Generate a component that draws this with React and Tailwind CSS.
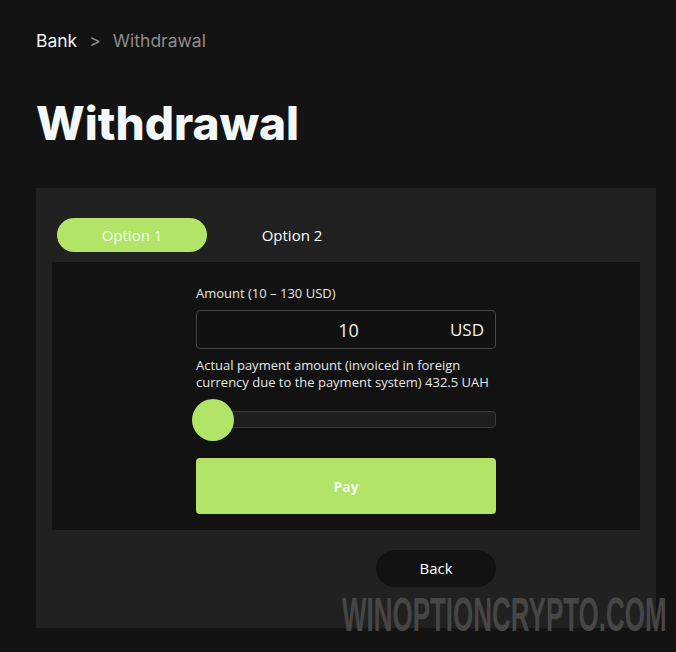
import React, { useState } from 'react';

const GREEN = 'bg-[#b1e467]';

export default function App() {
  const [tab, setTab] = useState(1);
  const [amount, setAmount] = useState('10');

  return (
    <div className="relative min-h-[652px] w-full overflow-hidden bg-[#131313] px-9 pt-[29px] pb-6 text-white" style={{ fontFamily: '"Open Sans", "Liberation Sans", sans-serif' }}>
      {/* breadcrumb */}
      <nav className="flex items-center gap-[12px] text-[17.5px] leading-[24px]" style={{ fontFamily: 'Inter, sans-serif' }}>
        <span className="text-[#f2f2f2]">Bank</span>
        <span className="text-[#8c8c8c]">&gt;</span>
        <span className="text-[#8c8c8c]">Withdrawal</span>
      </nav>

      <h1 className="mt-[42px] text-[46px] font-extrabold leading-[56px] tracking-[0px] text-[#f3f8f8]" style={{ fontFamily: 'Inter, sans-serif' }}>
        Withdrawal
      </h1>

      <div className="mt-[37px] w-[620px] bg-[#212121] px-4 pt-[30px] pb-[41px]">
        <div className="flex items-center gap-[20px] pl-[5px]">
          <button
            onClick={() => setTab(1)}
            className={`h-[34px] w-[150px] rounded-full text-[15px] ${tab === 1 ? `${GREEN} text-[#f4fbe9]` : 'text-white'}`}
          >
            Option 1
          </button>
          <button
            onClick={() => setTab(2)}
            className={`h-[34px] w-[130px] rounded-full text-[15px] ${tab === 2 ? `${GREEN} text-[#f4fbe9]` : 'text-white'}`}
          >
            Option 2
          </button>
        </div>

        <div className="mt-[10px] flex justify-center bg-[#121212] pt-[22px] pb-[16px]">
          <div className="w-[300px]">
            <label className="block text-[13px] leading-[18px] text-[#e6e6e6]">Amount (10 – 130 USD)</label>
            <div className="mt-[8px] flex h-[39px] items-center rounded-[4px] border border-[#464646] bg-[#111] pr-[11px]">
              <input
                value={amount}
                onChange={(e) => setAmount(e.target.value)}
                className="h-full min-w-0 flex-1 bg-transparent pl-[90px] text-center text-[18px] text-[#f2f2f2] outline-none"
              />
              <span className="ml-[40px] text-[17px] text-[#f2f2f2]">USD</span>
            </div>
            <p className="mt-[8px] text-[13px] leading-[17px] text-[#e6e6e6]">
              Actual payment amount (invoiced in foreign currency due to the payment system) 432.5 UAH
            </p>

            <div className="relative mt-[20px] h-[17px] rounded-[4px] border border-[#3a3a3a] bg-[#1e1e1e]">
              <div className={`absolute -top-[13px] -left-[5px] h-[42px] w-[42px] rounded-full ${GREEN}`} />
            </div>

            <button className={`mt-[30px] h-[56px] w-full rounded-[4px] ${GREEN} text-[14px] font-bold text-[#f6fbef]`}>
              Pay
            </button>
          </div>
        </div>

        <div className="mt-[20px] flex justify-end pr-[144px]">
          <button className="h-[37px] w-[120px] rounded-full bg-[#121212] text-[15px] text-white">Back</button>
        </div>
      </div>

      {/* site watermark */}
      <div
        className="pointer-events-none absolute left-[342px] top-[589px] origin-left scale-x-[0.53] text-[49px] font-black leading-[50px] text-[#464646] whitespace-nowrap"
        style={{ fontFamily: '"Liberation Sans", sans-serif' }}
      >
        WINOPTIONCRYPTO.COM
      </div>
    </div>
  );
}
